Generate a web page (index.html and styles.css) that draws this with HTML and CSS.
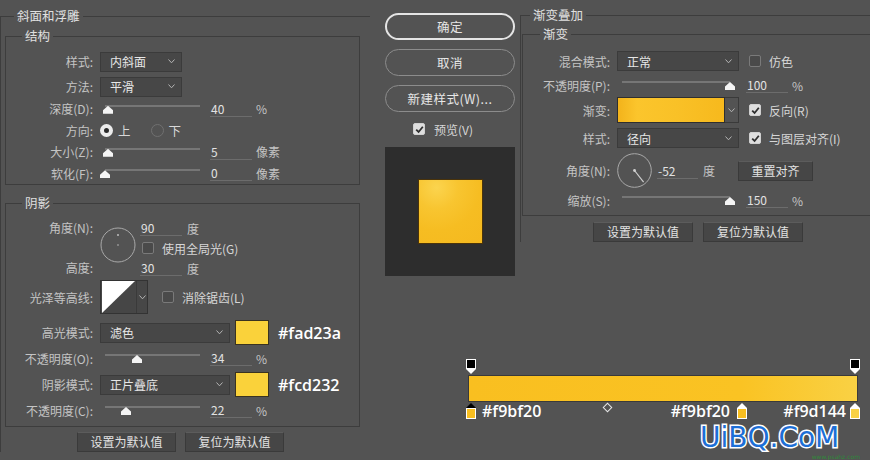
FILE: index.html
```html
<!DOCTYPE html>
<html lang="zh-CN">
<head>
<meta charset="utf-8">
<title>图层样式</title>
<link rel="stylesheet" href="styles.css">
</head>
<body>
<div class="dialog">
  <section class="left">
    <fieldset class="outer outer-left">
      <legend>斜面和浮雕</legend>
      <fieldset class="inner struct">
        <legend>结构</legend>
        <div class="row drow first"><span class="lbl">样式:</span><div class="dd w82"><span>内斜面</span><svg class="caret" width="7" height="5" viewBox="0 0 7 5"><polyline points="0.5,0.5 3.5,3.8 6.5,0.5"/></svg></div></div>
        <div class="row drow second"><span class="lbl">方法:</span><div class="dd w82"><span>平滑</span><svg class="caret" width="7" height="5" viewBox="0 0 7 5"><polyline points="0.5,0.5 3.5,3.8 6.5,0.5"/></svg></div></div>
        <div class="row srow"><span class="lbl">深度(D):</span><div class="slider"><div class="track"></div><span class="thumb" style="left:3px"></span></div><span class="num">40</span><span class="unit">%</span></div>
        <div class="row srow"><span class="lbl">方向:</span><span class="radio on"></span><span class="rlabel">上</span><span class="radio off"></span><span class="rlabel">下</span></div>
        <div class="row srow"><span class="lbl">大小(Z):</span><div class="slider"><div class="track"></div><span class="thumb" style="left:3px"></span></div><span class="num">5</span><span class="unit">像素</span></div>
        <div class="row srow"><span class="lbl">软化(F):</span><div class="slider"><div class="track"></div><span class="thumb" style="left:0px"></span></div><span class="num">0</span><span class="unit">像素</span></div>
      </fieldset>
      <fieldset class="inner shade">
        <legend>阴影</legend>
        <div class="angle-block">
          <div class="lblcol"><span class="lbl">角度(N):</span><span class="lbl">高度:</span></div>
          <svg class="dial" width="36" height="36" viewBox="0 0 36 36"><circle cx="18" cy="18" r="17" fill="none" stroke="#a9a9a9" stroke-width="1"/><circle cx="18" cy="8" r="1" fill="#bdbdbd"/><circle cx="18" cy="18" r="0.8" fill="#bdbdbd"/></svg>
          <div class="fields">
            <div class="frow"><span class="num">90</span><span class="unit">度</span></div>
            <div class="frow"><span class="cb"></span><span class="cblabel">使用全局光(G)</span></div>
            <div class="frow"><span class="num">30</span><span class="unit">度</span></div>
          </div>
        </div>
        <div class="row contour-row"><span class="lbl">光泽等高线:</span>
          <div class="contour"><svg class="curve" width="35" height="34" viewBox="0 0 35 34"><rect width="35" height="34" fill="#464646"/><polygon points="0,0 35,0 0,34" fill="#ffffff"/></svg><span class="ccaret"><svg class="caret" width="7" height="5" viewBox="0 0 7 5"><polyline points="0.5,0.5 3.5,3.8 6.5,0.5"/></svg></span></div>
          <span class="cb gap14"></span><span class="cblabel">消除锯齿(L)</span>
        </div>
        <div class="row mode-row m6"><span class="lbl">高光模式:</span><div class="dd w130"><span>滤色</span><svg class="caret" width="7" height="5" viewBox="0 0 7 5"><polyline points="0.5,0.5 3.5,3.8 6.5,0.5"/></svg></div><span class="swatch"></span><span class="hex">#fad23a</span></div>
        <div class="row orow m3"><span class="lbl">不透明度(O):</span><div class="slider"><div class="track"></div><span class="thumb" style="left:32px"></span></div><span class="num">34</span><span class="unit">%</span></div>
        <div class="row mode-row m4"><span class="lbl">阴影模式:</span><div class="dd w130"><span>正片叠底</span><svg class="caret" width="7" height="5" viewBox="0 0 7 5"><polyline points="0.5,0.5 3.5,3.8 6.5,0.5"/></svg></div><span class="swatch"></span><span class="hex">#fcd232</span></div>
        <div class="row orow m3"><span class="lbl">不透明度(C):</span><div class="slider"><div class="track"></div><span class="thumb" style="left:21px"></span></div><span class="num">22</span><span class="unit">%</span></div>
      </fieldset>
      <div class="btnrow left-btns"><span class="btn w99">设置为默认值</span><span class="btn w99">复位为默认值</span></div>
    </fieldset>
  </section>

  <section class="center">
    <div class="pill primary">确定</div>
    <div class="pill">取消</div>
    <div class="pill">新建样式(W)...</div>
    <div class="preview-check"><span class="cb on"><svg width="9" height="9" viewBox="0 0 9 9"><polyline points="1.2,4.6 3.6,7 7.8,1.8" fill="none" stroke="#2e2e2e" stroke-width="1.8"/></svg></span><span class="cblabel">预览(V)</span></div>
    <div class="preview"><div class="square"></div></div>
  </section>

  <section class="right">
    <fieldset class="outer outer-right">
      <legend>渐变叠加</legend>
      <fieldset class="inner grad">
        <legend>渐变</legend>
        <div class="row grow"><span class="lbl">混合模式:</span><div class="dd w122"><span>正常</span><svg class="caret" width="7" height="5" viewBox="0 0 7 5"><polyline points="0.5,0.5 3.5,3.8 6.5,0.5"/></svg></div><span class="cb gap10"></span><span class="cblabel">仿色</span></div>
        <div class="row grow m4"><span class="lbl">不透明度(P):</span><div class="slider wide"><div class="track"></div><span class="thumb" style="left:108px"></span></div><span class="num rnum">100</span><span class="unit">%</span></div>
        <div class="row gradrow m2"><span class="lbl">渐变:</span><div class="gbox"><span class="gprev"></span><span class="gcaret"><svg class="caret" width="7" height="5" viewBox="0 0 7 5"><polyline points="0.5,0.5 3.5,3.8 6.5,0.5"/></svg></span></div><span class="cb on gap10"><svg width="9" height="9" viewBox="0 0 9 9"><polyline points="1.2,4.6 3.6,7 7.8,1.8" fill="none" stroke="#2e2e2e" stroke-width="1.8"/></svg></span><span class="cblabel">反向(R)</span></div>
        <div class="row grow m5"><span class="lbl">样式:</span><div class="dd w122"><span>径向</span><svg class="caret" width="7" height="5" viewBox="0 0 7 5"><polyline points="0.5,0.5 3.5,3.8 6.5,0.5"/></svg></div><span class="cb on gap10"><svg width="9" height="9" viewBox="0 0 9 9"><polyline points="1.2,4.6 3.6,7 7.8,1.8" fill="none" stroke="#2e2e2e" stroke-width="1.8"/></svg></span><span class="cblabel">与图层对齐(I)</span></div>
        <div class="row anglerow m5"><span class="lbl">角度(N):</span><svg class="dial2" width="35" height="35" viewBox="0 0 35 35"><circle cx="17.5" cy="17.5" r="16.8" fill="none" stroke="#a9a9a9" stroke-width="1"/><line x1="17.5" y1="17.5" x2="26.6" y2="29.2" stroke="#cfcfcf" stroke-width="1.2"/><circle cx="17.5" cy="17.5" r="1.4" fill="#d0d0d0"/></svg><span class="num anum">-52</span><span class="unit">度</span><span class="btn reset">重置对齐</span></div>
        <div class="row grow m2"><span class="lbl">缩放(S):</span><div class="slider wide"><div class="track"></div><span class="thumb" style="left:108px"></span></div><span class="num rnum">150</span><span class="unit">%</span></div>
      </fieldset>
      <div class="btnrow right-btns"><span class="btn w100">设置为默认值</span><span class="btn w100">复位为默认值</span></div>
    </fieldset>
  </section>

  <section class="geditor">
    <div class="stops-top">
      <svg class="ostop" style="left:2px" width="10" height="15" viewBox="0 0 10 15"><rect x="0.5" y="0.5" width="9" height="9" fill="#000" stroke="#fff"/><polygon points="0,10 10,10 5,15" fill="#fff"/></svg>
      <svg class="ostop" style="left:386px" width="10" height="15" viewBox="0 0 10 15"><rect x="0.5" y="0.5" width="9" height="9" fill="#000" stroke="#fff"/><polygon points="0,10 10,10 5,15" fill="#fff"/></svg>
    </div>
    <div class="gbar"></div>
    <div class="stops-bottom">
      <div class="cstop" style="left:2px"><svg width="10" height="16" viewBox="0 0 10 16"><polygon points="5,0 10,5 0,5" fill="#000"/><rect x="0.5" y="5.5" width="9" height="10" fill="#f9bf20" stroke="#fff"/></svg><span class="lab after">#f9bf20</span></div>
      <span class="mid" style="left:140px"></span>
      <div class="cstop" style="left:273px"><svg width="10" height="16" viewBox="0 0 10 16"><polygon points="5,0 10,5 0,5" fill="#fff"/><rect x="0.5" y="5.5" width="9" height="10" fill="#f9bf20" stroke="#fff"/></svg><span class="lab before">#f9bf20</span></div>
      <div class="cstop" style="left:386px"><svg width="10" height="16" viewBox="0 0 10 16"><polygon points="5,0 10,5 0,5" fill="#fff"/><rect x="0.5" y="5.5" width="9" height="10" fill="#f9d144" stroke="#fff"/></svg><span class="lab before near">#f9d144</span></div>
    </div>
  </section>
</div>
<div class="watermark"><span class="wm-main">UiBQ.CoM</span><span class="wm-sub">www.psahz.com</span></div>
</body>
</html>
```

FILE: styles.css
```css
html, body {
  margin: 0;
  padding: 0;
}
body {
  width: 870px;
  height: 460px;
  overflow: hidden;
  position: relative;
  background: #535353;
  color: #c6c6c6;
  font-family: "Noto Sans CJK SC", "Noto Sans", sans-serif;
  font-size: 12px;
}
.dialog {
  display: grid;
  grid-template-columns: 370px 150px 350px;
  grid-template-rows: auto 1fr;
  height: 460px;
}
.left { grid-column: 1; grid-row: 1 / 3; }
.center { grid-column: 2; grid-row: 1; padding-left: 15px; }
.right { grid-column: 3; grid-row: 1; overflow: hidden; }

fieldset {
  margin: 0;
  padding: 0;
  min-width: 0;
  border: 1px solid #3d3d3d;
  box-sizing: border-box;
}
legend {
  padding: 0 3px;
  line-height: 14px;
  font-size: 12.5px;
  color: #e0e0e0;
}
.outer {
  border-width: 1px 0 0 1px;
  margin-top: 9px;
}
.outer-left { width: 370px; padding: 0 0 0 4px; }
.outer-left > legend { margin-left: 9px; }
.outer-right { width: 350px; padding: 0 0 0 1px; margin-top: 8px; }
.outer-right > legend { margin-left: 8px; }

.inner > legend { margin-left: 16px; }
.struct { width: 355px; margin-top: 6px; padding: 8px 0 0 0; }
.shade { width: 355px; margin-top: 11px; padding: 8px 0 6px 0; }
.grad { width: 360px; margin-top: 5px; padding: 10px 0 5px 0; }
.grad > legend { margin-left: 17px; }

.row {
  display: flex;
  align-items: center;
}
.lbl {
  width: 87px;
  margin-right: 7px;
  flex: none;
  text-align: right;
  white-space: nowrap;
  color: #c4c4c4;
}
.drow { height: 21px; }
.drow.first { margin-bottom: 4px; }
.drow.second { margin-bottom: 1px; }
.srow { height: 21.5px; }
.orow { height: 20px; }
.m2 { margin-top: 2px; }
.m3 { margin-top: 3px; }
.m4 { margin-top: 4px; }
.m5 { margin-top: 5px; }
.m6 { margin-top: 6px; }

.dd {
  box-sizing: border-box;
  height: 20px;
  background: #474747;
  border: 1px solid #3b3b3b;
  display: flex;
  align-items: center;
  justify-content: space-between;
  padding: 0 6px 0 9px;
  color: #e6e6e6;
  white-space: nowrap;
}
.w82 { width: 82px; }
.w122 { width: 122px; }
.w130 { width: 130px; }
.caret polyline {
  fill: none;
  stroke: #b4b4b4;
  stroke-width: 1;
}

.slider {
  position: relative;
  width: 100px;
  height: 100%;
  flex: none;
  display: flex;
  flex-direction: column;
  justify-content: center;
}
.slider.wide { width: 113px; }
.track {
  height: 2px;
  margin: 0 0 6px 5px;
  background: #767676;
}
.thumb {
  position: absolute;
  top: calc(50% - 3px);
  width: 10px;
  height: 8px;
  background: #f4f4f4;
  clip-path: polygon(50% 0, 100% 55%, 100% 100%, 0 100%, 0 55%);
}
.num {
  box-sizing: border-box;
  width: 42px;
  height: 16px;
  line-height: 15px;
  margin-left: 10px;
  padding-left: 1px;
  border-bottom: 1px solid #6c6c6c;
  color: #e2e2e2;
  font-size: 12px;
}
.rnum { margin-left: 16px; }
.unit { margin-left: 4px; color: #c4c4c4; }

.radio {
  box-sizing: border-box;
  width: 13px;
  height: 13px;
  border-radius: 50%;
  flex: none;
}
.radio.on {
  background: #2a2a2a;
  border: 4px solid #ececec;
}
.radio.off {
  border: 1px solid #707070;
  margin-left: 20px;
}
.rlabel { margin-left: 5px; color: #d8d8d8; font-size: 12.5px; }

.cb {
  box-sizing: border-box;
  width: 12px;
  height: 12px;
  flex: none;
  border: 1px solid #7a7a7a;
  border-radius: 2px;
  background: #4a4a4a;
  display: flex;
  align-items: center;
  justify-content: center;
}
.cb.on {
  background: #dedede;
  border-color: #d0d0d0;
}
.cblabel { margin-left: 8px; color: #d6d6d6; white-space: nowrap; }
.gap10 { margin-left: 10px; }
.gap14 { margin-left: 14px; }

/* shadow block */
.angle-block {
  display: flex;
  height: 60px;
}
.lblcol {
  display: flex;
  flex-direction: column;
  justify-content: space-between;
  width: 87px;
  margin-right: 7px;
}
.lblcol .lbl { line-height: 20px; margin-right: 0; }
.dial { flex: none; margin-top: 9px; }
.fields {
  margin-left: 4px;
  display: flex;
  flex-direction: column;
}
.fields .frow {
  height: 20px;
  display: flex;
  align-items: center;
}
.fields .num { margin-left: 0; }
.fields .unit { margin-left: 5px; }
.fields .cb { margin-left: 2px; }
.contour-row { height: 34px; margin-top: 2px; }
.contour {
  display: flex;
  height: 34px;
  box-sizing: border-box;
  border: 1px solid #333;
  background: #474747;
}
.curve { display: block; width: 35px; height: 32px; }
.ccaret {
  width: 10px;
  border-left: 1px solid #3a3a3a;
  display: flex;
  align-items: center;
  justify-content: center;
}
.mode-row { height: 25px; }
.swatch {
  box-sizing: border-box;
  width: 34px;
  height: 25px;
  margin-left: 5px;
  background: #fad23a;
  border: 1px solid #3a3320;
  flex: none;
}
.hex {
  margin-left: 9px;
  font-family: "Open Sans", "Liberation Sans", sans-serif;
  font-weight: 600;
  font-size: 16px;
  color: #ffffff;
}

.btnrow { display: flex; }
.left-btns { margin: 5px 0 0 72px; gap: 9px; }
.right-btns { margin: 6px 0 0 71px; gap: 10px; }
.btn {
  box-sizing: border-box;
  height: 20px;
  line-height: 18px;
  text-align: center;
  background: #464646;
  border: 1px solid #3a3a3a;
  border-top-color: #5c5c5c;
  color: #e2e2e2;
  white-space: nowrap;
}
.w99 { width: 99px; }
.w100 { width: 100px; }

/* center column */
.pill {
  box-sizing: border-box;
  width: 130px;
  height: 27px;
  margin-top: 9px;
  border: 1px solid #8c8c8c;
  border-radius: 14px;
  text-align: center;
  line-height: 25px;
  color: #e6e6e6;
  font-size: 12.5px;
  letter-spacing: 0.5px;
}
.pill.primary {
  margin-top: 13px;
  border: 2px solid #e4e4e4;
  line-height: 23px;
}
.preview-check {
  display: flex;
  align-items: center;
  height: 18px;
  margin: 8px 0 0 28px;
}
.preview-check .cblabel { margin-left: 9px; }
.preview {
  width: 130px;
  height: 129px;
  margin-top: 9px;
  background: #2d2d2d;
  display: flex;
  align-items: center;
  justify-content: center;
}
.square {
  box-sizing: border-box;
  width: 65px;
  height: 65px;
  border: 1px solid #4a330a;
  background: radial-gradient(circle at 28% 12%, #fbd44e 0%, #f8c530 30%, #f6bd22 60%, #f5b91f 100%);
}

/* right panel */
.grow { height: 20px; }
.gradrow { height: 26px; }
.gbox { display: flex; height: 26px; }
.gprev {
  box-sizing: border-box;
  width: 108px;
  height: 26px;
  border: 1px solid #2f2f2f;
  background: linear-gradient(90deg, #f3b31b 0%, #fbc52c 18%, #f9c127 55%, #f7b91d 100%);
}
.gcaret {
  box-sizing: border-box;
  width: 14px;
  border: 1px solid #3a3a3a;
  border-left: none;
  display: flex;
  align-items: center;
  justify-content: center;
}
.anglerow { height: 35px; }
.dial2 { flex: none; }
.anum { margin-left: 5px; width: 41px; }
.anglerow .unit { margin-left: 5px; }
.reset { width: 75px; margin-left: 23px; }

/* gradient editor */
.geditor {
  grid-column: 2 / 4;
  grid-row: 2;
  align-self: start;
  width: 400px;
  margin: 83px 0 0 94px;
}
.stops-top {
  position: relative;
  height: 15px;
}
.ostop { position: absolute; top: 0; display: block; }
.gbar {
  box-sizing: border-box;
  height: 27px;
  margin: 1px 6px 0 4px;
  border: 1px solid #3a3a3a;
  background: linear-gradient(90deg, #f9bf20 0%, #fac323 70%, #f9d144 100%);
}
.stops-bottom {
  position: relative;
  height: 18px;
  margin-top: 1px;
}
.cstop {
  position: absolute;
  top: 0;
  width: 10px;
  height: 16px;
}
.cstop svg { display: block; }
.lab {
  position: absolute;
  top: -3px;
  font-family: "Open Sans", "Liberation Sans", sans-serif;
  font-weight: 600;
  font-size: 16px;
  line-height: 22px;
  color: #ffffff;
  white-space: nowrap;
}
.lab.after { left: 16px; }
.lab.before { right: 17px; }
.lab.before.near { right: 14px; }
.mid {
  position: absolute;
  top: 1px;
  width: 5px;
  height: 5px;
  border: 1px solid #e8e8e8;
  transform: rotate(45deg);
}

.watermark {
  position: absolute;
  right: 10px;
  bottom: 0;
  width: 160px;
  display: flex;
  flex-direction: column;
  align-items: flex-end;
}
.wm-main {
  align-self: flex-start;
  font-family: "DejaVu Sans", sans-serif;
  font-size: 28px;
  line-height: 32px;
  color: #1d6fd6;
  -webkit-text-stroke: 3px #ffffff;
  paint-order: stroke fill;
}
.wm-sub {
  font-family: "DejaVu Sans", sans-serif;
  font-size: 6px;
  line-height: 6px;
  color: #2f8a3a;
}
```
